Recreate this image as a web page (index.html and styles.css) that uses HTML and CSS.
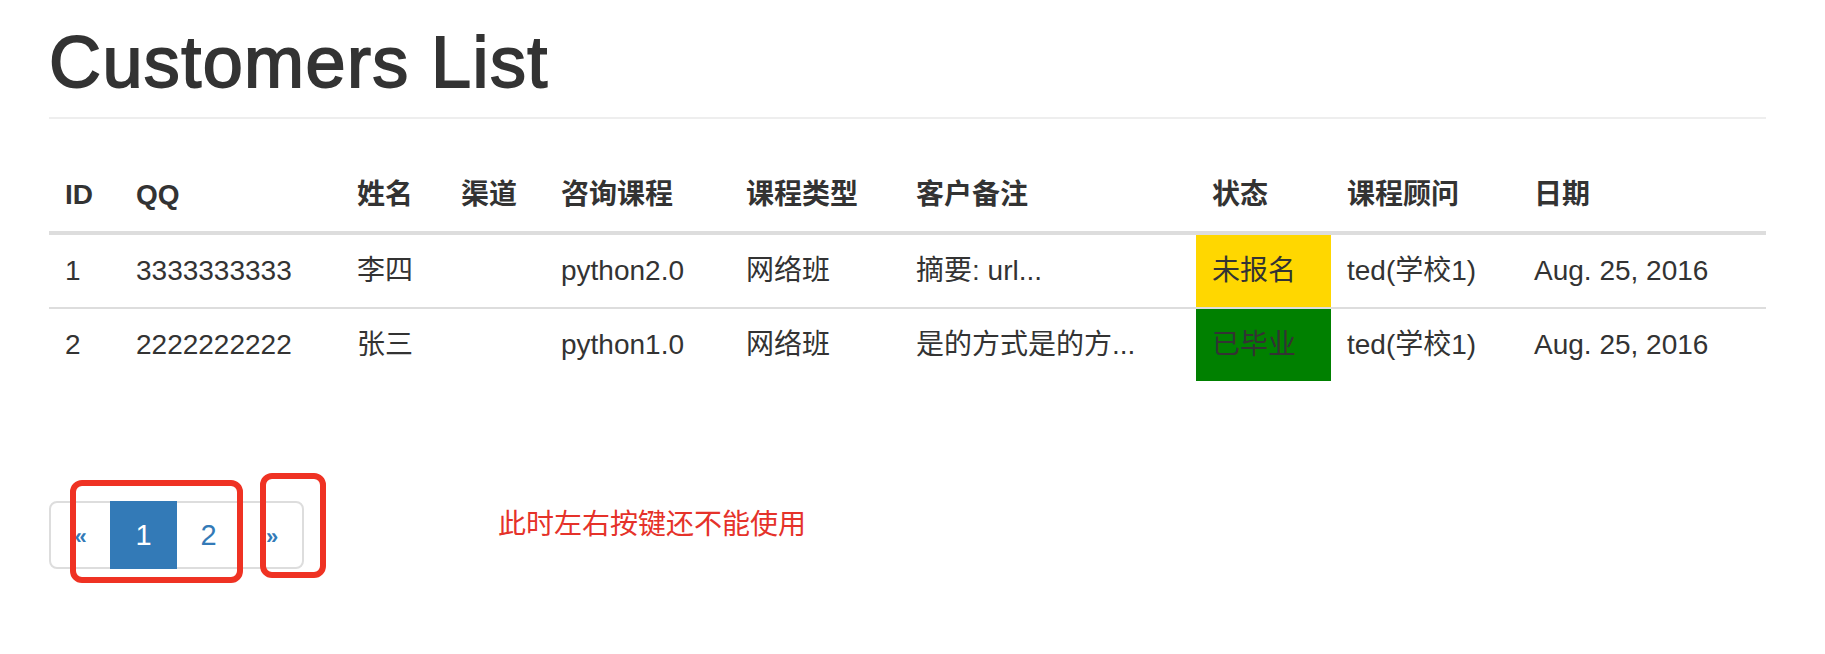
FILE: index.html
```html
<!DOCTYPE html>
<html lang="zh-CN">
<head>
<meta charset="utf-8">
<title>Customers List</title>
<link rel="stylesheet" href="styles.css">
</head>
<body>
<div class="page">
  <div class="page-header">
    <h1>Customers List</h1>
  </div>

  <table class="table">
    <colgroup>
      <col class="c-id">
      <col class="c-qq">
      <col class="c-name">
      <col class="c-source">
      <col class="c-course">
      <col class="c-type">
      <col class="c-memo">
      <col class="c-status">
      <col class="c-consultant">
      <col class="c-date">
    </colgroup>
    <thead>
      <tr>
        <th>ID</th>
        <th>QQ</th>
        <th>姓名</th>
        <th>渠道</th>
        <th>咨询课程</th>
        <th>课程类型</th>
        <th>客户备注</th>
        <th>状态</th>
        <th>课程顾问</th>
        <th>日期</th>
      </tr>
    </thead>
    <tbody>
      <tr>
        <td>1</td>
        <td>3333333333</td>
        <td>李四</td>
        <td></td>
        <td>python2.0</td>
        <td>网络班</td>
        <td>摘要: url...</td>
        <td class="status status-unsigned">未报名</td>
        <td>ted(学校1)</td>
        <td>Aug. 25, 2016</td>
      </tr>
      <tr>
        <td>2</td>
        <td>2222222222</td>
        <td>张三</td>
        <td></td>
        <td>python1.0</td>
        <td>网络班</td>
        <td>是的方式是的方...</td>
        <td class="status status-graduated">已毕业</td>
        <td>ted(学校1)</td>
        <td>Aug. 25, 2016</td>
      </tr>
    </tbody>
  </table>

  <div class="pager-row">
    <nav class="pager-wrap">
      <ul class="pagination">
        <li class="arrow"><a href="#">&laquo;</a></li>
        <li class="active"><a href="#">1</a></li>
        <li><a href="#">2</a></li>
        <li class="arrow arrow-next"><a href="#">&raquo;</a></li>
      </ul>
      <span class="mark mark-pages"></span>
      <span class="mark mark-next"></span>
    </nav>
    <p class="note">此时左右按键还不能使用</p>
  </div>
</div>
</body>
</html>
```

FILE: styles.css
```css
* {
  box-sizing: border-box;
}

html, body {
  margin: 0;
  padding: 0;
  background: #ffffff;
}

body {
  min-height: 654px;
  font-family: "Liberation Sans", "Noto Sans CJK SC", sans-serif;
  font-size: 28px;
  line-height: 40px;
  color: #333333;
}

.page {
  width: 1717px;
  margin-left: 49px;
  padding-bottom: 80px;
}

/* ---------- header ---------- */
.page-header {
  padding-top: 23px;
  padding-bottom: 15px;
  border-bottom: 2px solid #eeeeee;
  margin-bottom: 40px;
}

.page-header h1 {
  margin: 0;
  font-size: 72px;
  line-height: 79px;
  font-weight: 500;
  letter-spacing: 1.4px;
  -webkit-text-stroke: 1.8px #333333;
  color: #333333;
}

/* ---------- table ---------- */
.table {
  width: 1717px;
  table-layout: fixed;
  border-collapse: collapse;
  border-spacing: 0;
  margin-bottom: 0;
}

.c-id { width: 71px; }
.c-qq { width: 221px; }
.c-name { width: 104px; }
.c-source { width: 100px; }
.c-course { width: 185px; }
.c-type { width: 170px; }
.c-memo { width: 296px; }
.c-status { width: 135px; }
.c-consultant { width: 187px; }
.c-date { width: 248px; }

.table th,
.table td {
  padding: 16px;
  line-height: 40px;
  text-align: left;
  white-space: nowrap;
}

.table thead th {
  font-weight: bold;
  vertical-align: bottom;
  border-bottom: 4px solid #dddddd;
}

.table tbody td {
  vertical-align: top;
  border-top: 2px solid #dddddd;
}

.status-unsigned {
  background: #ffd700;
}

.status-graduated {
  background: #008000;
}

/* ---------- pagination ---------- */
.pager-row {
  display: flex;
  align-items: flex-start;
  margin-top: 120px;
}

.pager-wrap {
  position: relative;
  width: 256px;
  flex: none;
}

.pagination {
  display: flex;
  margin: 0;
  padding: 0;
  list-style: none;
}

.pagination li {
  display: block;
}

.pagination li + li {
  margin-left: -2px;
}

.pagination a {
  display: block;
  width: 67px;
  height: 68px;
  padding: 12px 0;
  text-align: center;
  font-size: 29px;
  line-height: 40px;
  color: #337ab7;
  text-decoration: none;
  background: #ffffff;
  border: 2px solid #dddddd;
  position: relative;
}

.pagination .arrow a {
  width: 63px;
  font-size: 22px;
  font-weight: bold;
  padding-top: 14px;
  border-radius: 8px 0 0 8px;
}

.pagination .arrow-next a {
  width: 64px;
  border-radius: 0 8px 8px 0;
}

.pagination .active a {
  z-index: 2;
  color: #ffffff;
  background: #337ab7;
  border-color: #337ab7;
}

/* red annotation frames drawn over the pager */
.mark {
  position: absolute;
  border: 6px solid #ef3223;
  border-radius: 12px;
  z-index: 5;
}

.mark-pages {
  left: 21px;
  top: -21px;
  width: 173px;
  height: 103px;
}

.mark-next {
  left: 211px;
  top: -28px;
  width: 66px;
  height: 105px;
}

.note {
  margin: 4px 0 0 193px;
  font-size: 28px;
  line-height: 40px;
  color: #e5322a;
}
```
